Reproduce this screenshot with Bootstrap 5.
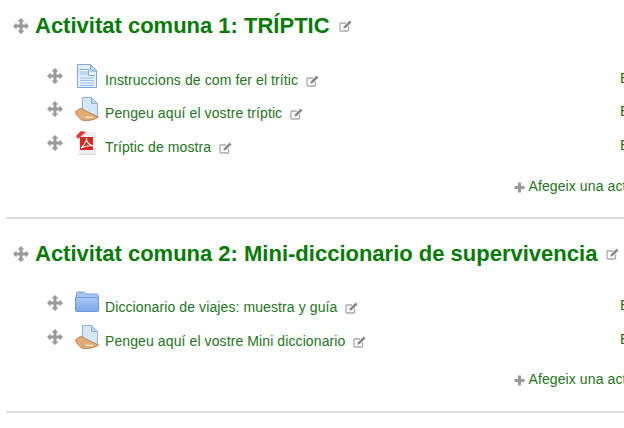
<!DOCTYPE html>
<html lang="ca">
<head>
  <meta charset="UTF-8" />
  <meta name="viewport" content="width=device-width, initial-scale=1.0"/>
  <title>Activitats</title>
  <link href="https://cdn.jsdelivr.net/npm/bootstrap@5.3.0/dist/css/bootstrap.min.css" rel="stylesheet" />
  <style>
      html, body { overflow: hidden; }
      body { background: #fff; font-family: "Liberation Sans", Arial, sans-serif; font-size: 14px; letter-spacing: .1px; color: #257325; width: 624px; height: 428px; }
      .course-wrap { width: 725px; margin-left: 6px; margin-top: -9px; }
      .topic-box { border-bottom: 2px solid #ddd; padding-top: 21px; padding-bottom: 20.5px; }
      .topic-head { height: 28px; padding-left: 7px; margin-bottom: 21.7px; }
      .topic-head h3 { font-family: "Liberation Sans", Arial, sans-serif; font-size: 22px; font-weight: 700; letter-spacing: 0; line-height: 28px; color: #067a06; margin: 0 9px 0 6px; }
      .item-row { height: 33.5px; padding-left: 41px; }
      .item-move { width: 16px; height: 16px; margin-top: 6px; }
      .item-icon { width: 24px; height: 24px; margin-top: 2px; margin-left: 12px; margin-right: 6px; }
      .item-name { margin-top: 8px; line-height: 20px; color: #257325; text-decoration: none; }
      .item-edit { margin-left: 8px; margin-top: 13px; }
      .item-right { width: 111px; margin-top: 6px; line-height: 20px; color: #2a6a10; }
      .add-line { margin-top: 14px; height: 20px; line-height: 20px; }
      .add-line a { color: #257325; text-decoration: none; }
      .add-line svg { margin-right: 3px; margin-top: 2px; }
      .topic-box + .topic-box .topic-head { margin-bottom: 21.4px; }
      .topic-box + .topic-box .add-line { margin-top: 13px; margin-bottom: 1px; }
  </style>
</head>
<body>
  <svg width="0" height="0" class="d-block position-absolute">
    <defs>
      <linearGradient id="folder-fill" x1="0" y1="0" x2="0" y2="1">
        <stop offset="0" stop-color="#a9c6f5"/>
        <stop offset="1" stop-color="#7ea6ea"/>
      </linearGradient>
      <symbol id="ic-move" viewBox="0 0 16 16">
        <path fill="#999" d="M8 0 11.500 3.500H9.500V6.500H12.500V4.500L16 8 12.500 11.500V9.500H9.500V12.500H11.500L8 16 4.500 12.500H6.500V9.500H3.500V11.500L0 8 3.500 4.500V6.500H6.500V3.500H4.500Z"/>
      </symbol>
      <symbol id="ic-edit" viewBox="0 0 13 12">
        <path fill="none" stroke="#aaa" stroke-width="1.3" d="M9.5 6.5V10.2Q9.5 11 8.7 11H1.8Q1 11 1 10.2V3.8Q1 3 1.8 3H7"/>
        <path fill="#888" d="M10.6.6 12.5 2.4 6.8 8 4.4 8.7 5 6.2Z"/>
      </symbol>
      <symbol id="ic-plus" viewBox="0 0 11 11">
        <path fill="#999" d="M4 .5H7V4H10.5V7H7V10.5H4V7H.5V4H4Z"/>
      </symbol>
      <symbol id="ic-doc" viewBox="0 0 24 24">
        <path fill="#e3effb" stroke="#7fa6d8" d="M2.500.5H15.500L21.500 7V23.500H2.500Z"/>
        <path fill="#c4dcf5" stroke="#7fa6d8" d="M15.500.5V7H21.500Z"/>
        <path fill="#fff" stroke="#7fa6d8" d="M4.500 5.500H13.500V11.500H20"/>
        <path fill="#bcd5f0" d="M4.500 7H13V11H4.500Z"/>
        <path stroke="#9dbde3" d="M5 14H19M5 16.500H19M5 19H19M5 21.500H19"/>
      </symbol>
      <symbol id="ic-hand" viewBox="0 0 24 24">
        <path fill="#d6e7f9" stroke="#8fb2de" d="M7.500.5H16.500L22.500 6.500V20.500H7.500Z"/>
        <path fill="#bdd6f2" stroke="#8fb2de" d="M16.500.5V6.500H22.500Z"/>
        <path fill="#e2ab74" stroke="#a97a44" stroke-width=".8" d="M.5 14.500 6 11 11 14 23.500 20 20 22 12 24 6.500 23 1.500 18Z"/>
        <path fill="#f8e8d0" d="M10 19.500 18 19.800 18 21 11 21Z"/>
      </symbol>
      <symbol id="ic-pdf" viewBox="0 0 24 24">
        <path fill="#efefef" d="M3 1H21V23H4Z"/>
        <path fill="#d8d8d8" d="M3.500 23H21V24H3.500Z"/>
        <path fill="#e53b33" d="M1 5 6 0 11 1 3 8Z"/>
        <path fill="#d9281f" d="M5 6H18V19H5Z"/>
        <path fill="none" stroke="#fff" stroke-width="1.100" d="M6 17C10 13 12 9 11.500 7 11 9 13 14 18 15 14 14.500 10 15 6 17Z"/>
      </symbol>
      <symbol id="ic-folder" viewBox="0 0 24 24">
        <path fill="#a9c4ef" stroke="#7da0dc" d="M1.500 5V2Q1.500 1 2.500 1H9L11 3H22Q23 3 23 4V8H1.500Z"/>
        <path fill="url(#folder-fill)" stroke="#6f9ae0" d="M.5 6.500H23.500V19.500Q23.500 20.500 22.500 20.500H1.500Q.5 20.500 .5 19.500Z"/>
      </symbol>
    </defs>
  </svg>

  <div class="course-wrap">
    <div class="topic-box">
      <div class="topic-head d-flex align-items-center">
        <svg width="16" height="16"><use href="#ic-move"/></svg>
        <h3>Activitat comuna 1: TRÍPTIC</h3>
        <svg width="13" height="12"><use href="#ic-edit"/></svg>
      </div>
      <div class="item-row d-flex align-items-start">
        <svg class="item-move flex-shrink-0"><use href="#ic-move"/></svg>
        <svg class="item-icon flex-shrink-0"><use href="#ic-doc"/></svg>
        <a class="item-name" href="#">Instruccions de com fer el trític</a>
        <svg class="item-edit" width="13" height="12"><use href="#ic-edit"/></svg>
        <span class="item-right ms-auto">Edita</span>
      </div>
      <div class="item-row d-flex align-items-start">
        <svg class="item-move flex-shrink-0"><use href="#ic-move"/></svg>
        <svg class="item-icon flex-shrink-0"><use href="#ic-hand"/></svg>
        <a class="item-name" href="#">Pengeu aquí el vostre tríptic</a>
        <svg class="item-edit" width="13" height="12"><use href="#ic-edit"/></svg>
        <span class="item-right ms-auto">Edita</span>
      </div>
      <div class="item-row d-flex align-items-start">
        <svg class="item-move flex-shrink-0"><use href="#ic-move"/></svg>
        <svg class="item-icon flex-shrink-0"><use href="#ic-pdf"/></svg>
        <a class="item-name" href="#">Tríptic de mostra</a>
        <svg class="item-edit" width="13" height="12"><use href="#ic-edit"/></svg>
        <span class="item-right ms-auto">Edita</span>
      </div>
      <div class="add-line d-flex justify-content-end align-items-center">
        <svg width="11" height="11"><use href="#ic-plus"/></svg>
        <a href="#">Afegeix una activitat o un recurs</a>
      </div>
    </div>

    <div class="topic-box">
      <div class="topic-head d-flex align-items-center">
        <svg width="16" height="16"><use href="#ic-move"/></svg>
        <h3>Activitat comuna 2: Mini-diccionario de supervivencia</h3>
        <svg width="13" height="12"><use href="#ic-edit"/></svg>
      </div>
      <div class="item-row d-flex align-items-start">
        <svg class="item-move flex-shrink-0"><use href="#ic-move"/></svg>
        <svg class="item-icon flex-shrink-0"><use href="#ic-folder"/></svg>
        <a class="item-name" href="#">Diccionario de viajes: muestra y guía</a>
        <svg class="item-edit" width="13" height="12"><use href="#ic-edit"/></svg>
        <span class="item-right ms-auto">Edita</span>
      </div>
      <div class="item-row d-flex align-items-start">
        <svg class="item-move flex-shrink-0"><use href="#ic-move"/></svg>
        <svg class="item-icon flex-shrink-0"><use href="#ic-hand"/></svg>
        <a class="item-name" href="#">Pengeu aquí el vostre Mini diccionario</a>
        <svg class="item-edit" width="13" height="12"><use href="#ic-edit"/></svg>
        <span class="item-right ms-auto">Edita</span>
      </div>
      <div class="add-line d-flex justify-content-end align-items-center">
        <svg width="11" height="11"><use href="#ic-plus"/></svg>
        <a href="#">Afegeix una activitat o un recurs</a>
      </div>
    </div>
  </div>

  <script src="https://cdn.jsdelivr.net/npm/bootstrap@5.3.0/dist/js/bootstrap.bundle.min.js"></script>
</body>
</html>
